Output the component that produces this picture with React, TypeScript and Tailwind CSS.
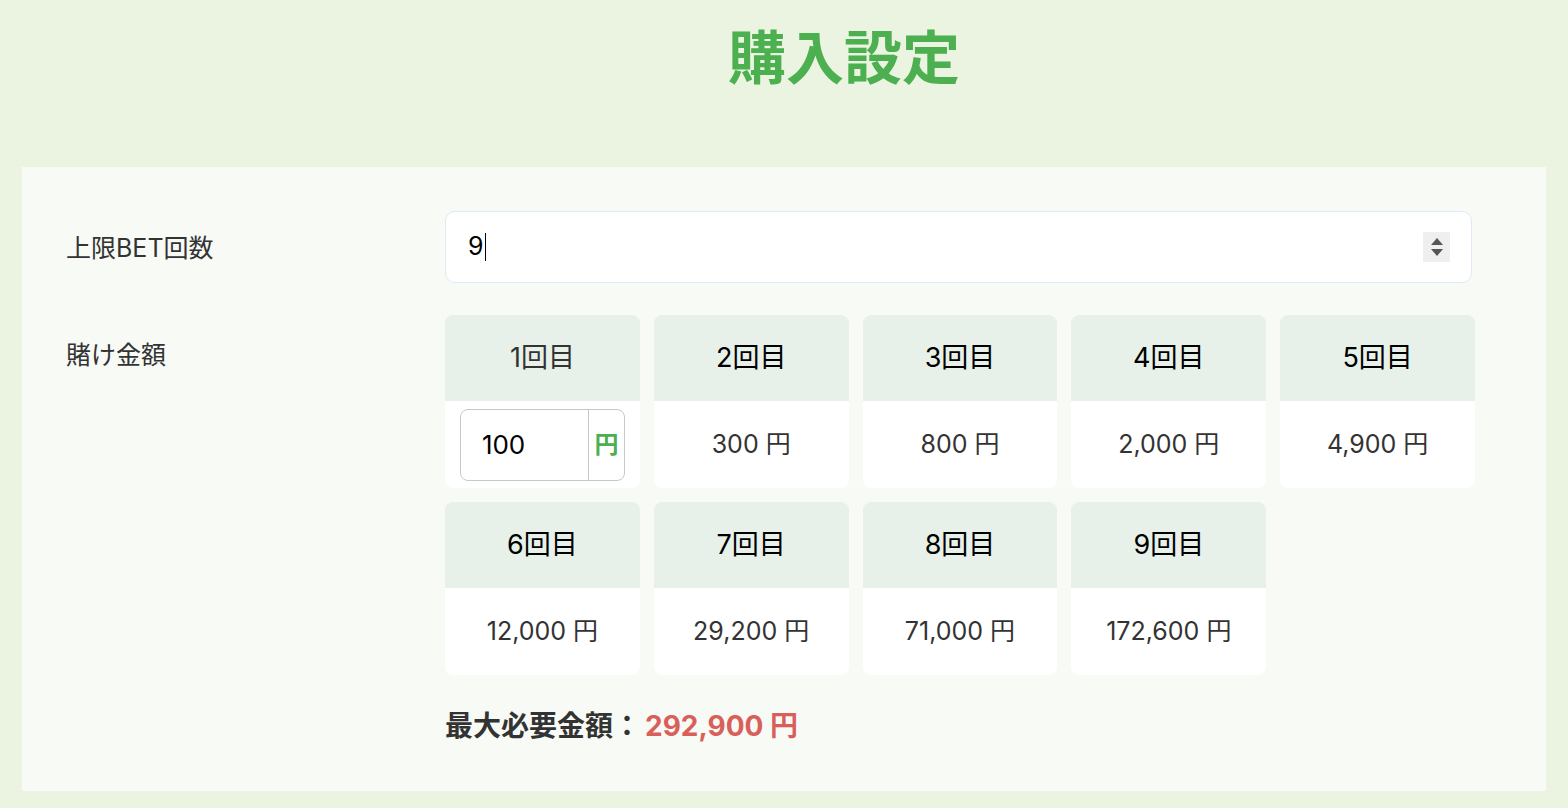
import React from "react";

const amounts = ["300", "800", "2,000", "4,900", "12,000", "29,200", "71,000", "172,600"];

export default function App() {
  const font = { fontFamily: 'Inter, "Noto Sans CJK JP", "Noto Sans", sans-serif' };
  return (
    <div className="min-h-[808px] w-full bg-[#ebf4e1] pb-[18px]" style={font}>
      <h1 className="h-[117px] pl-[120px] pt-[18px] text-center text-[58px] font-bold leading-[80px] text-[#4caf50]">購入設定</h1>
      <div className="mx-[22px] mt-[50px] bg-[#f7faf5] pl-[44px] pr-[70px] pt-[44px] pb-[44px]">
        <div className="flex items-center pr-[4px]">
          <div className="w-[379px] pt-[4px] text-[25px] text-[#333]">上限BET回数</div>
          <div className="flex h-[72px] flex-1 items-center rounded-[10px] border border-[#e1e8f7] bg-white pl-[22px] pr-[21px]">
            <span className="text-[25px] text-black">9</span>
            <span className="ml-[1px] h-[28px] w-[1px] bg-black" />
            <div className="ml-auto flex h-[30px] w-[27px] flex-col items-center justify-center gap-[4px] bg-[#efefef]">
              <svg width="12" height="7" viewBox="0 0 12 7"><path d="M6 0 L12 7 L0 7 Z" fill="#555" /></svg>
              <svg width="12" height="7" viewBox="0 0 12 7"><path d="M0 0 L12 0 L6 7 Z" fill="#555" /></svg>
            </div>
          </div>
        </div>
        <div className="mt-[32px] flex">
          <div className="w-[379px] pt-[22px] text-[25px] text-[#333]">賭け金額</div>
          <div className="w-[1030px]">
            <div className="grid grid-cols-5 gap-x-[14px] gap-y-[14px]">
              <div className="overflow-hidden rounded-[8px] bg-white">
                <div className="flex h-[86px] items-center justify-center bg-[#e7f1e9] text-[27px] text-[#333]">1回目</div>
                <div className="flex h-[87px] items-center justify-center">
                  <div className="flex h-[72px] w-[165px] overflow-hidden rounded-[8px] border border-[#c8c8c8] bg-white">
                    <div className="flex flex-1 items-center pl-[21px] text-[26px] text-black">100</div>
                    <div className="flex w-[36px] items-center justify-center border-l border-[#c8c8c8] text-[24px] font-bold text-[#4caf50]">円</div>
                  </div>
                </div>
              </div>
              {amounts.map((a, i) => (
                <div key={i} className="overflow-hidden rounded-[8px] bg-white">
                  <div className="flex h-[86px] items-center justify-center bg-[#e7f1e9] text-[27px] text-black">{i + 2}回目</div>
                  <div className="flex h-[87px] items-center justify-center text-[25px] text-[#333]">{a} 円</div>
                </div>
              ))}
            </div>
            <div className="mt-[30px] text-[28px] font-bold text-[#333]">
              最大必要金額：<span className="ml-[4px] text-[#d9605a]">292,900 円</span>
            </div>
          </div>
        </div>
      </div>
    </div>
  );
}
